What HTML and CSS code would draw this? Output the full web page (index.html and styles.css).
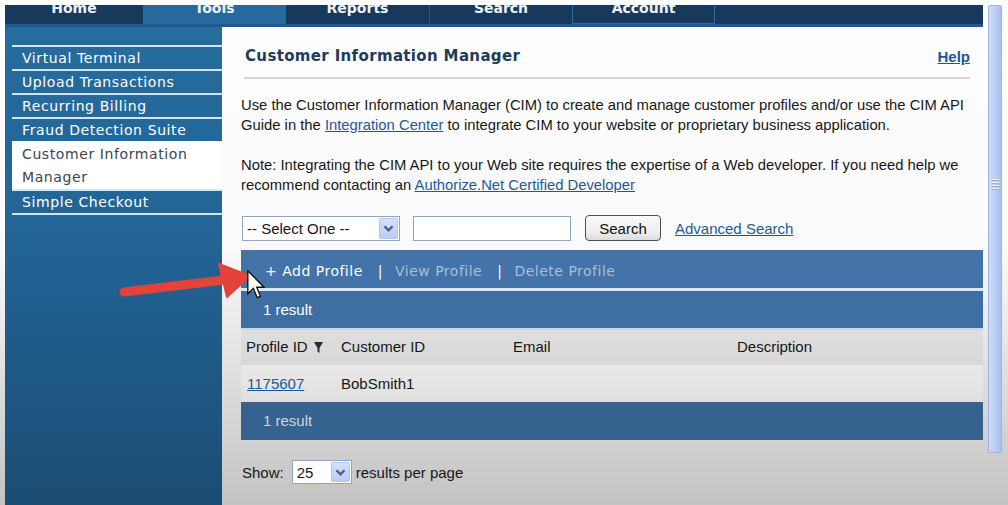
FILE: index.html
```html
<!DOCTYPE html>
<html lang="en">
<head>
<meta charset="utf-8">
<title>Customer Information Manager</title>
<link rel="stylesheet" href="styles.css">
</head>
<body>
<div class="screen">
  <div class="app">
    <nav class="topnav">
      <a class="tab"><span>Home</span></a>
      <a class="tab active"><span>Tools</span></a>
      <a class="tab"><span>Reports</span></a>
      <a class="tab divided"><span>Search</span></a>
      <a class="tab outlined"><span>Account</span></a>
      <span class="tab-rest"></span>
    </nav>
    <div class="main">
      <aside class="sidebar">
        <ul class="menu">
          <li>Virtual Terminal</li>
          <li>Upload Transactions</li>
          <li>Recurring Billing</li>
          <li>Fraud Detection Suite</li>
          <li class="current">Customer Information<br>Manager</li>
          <li>Simple Checkout</li>
        </ul>
      </aside>
      <section class="content">
        <div class="title-row">
          <h1>Customer Information Manager</h1>
          <a class="help">Help</a>
        </div>
        <hr class="rule">
        <p class="intro">Use the Customer Information Manager (CIM) to create and manage customer profiles and/or use the CIM API Guide in the <a class="link">Integration Center</a> to integrate CIM to your website or proprietary business application.</p>
        <p class="note">Note: Integrating the CIM API to your Web site requires the expertise of a Web developer. If you need help we recommend contacting an <a class="link">Authorize.Net Certified Developer</a></p>
        <div class="search-row">
          <div class="select wide">
            <span class="select-text">-- Select One --</span>
            <span class="drop">
              <svg width="19" height="21" viewBox="0 0 19 21"><path d="M5 8 L9.5 12.5 L14 8" fill="none" stroke="#4a5f86" stroke-width="2.6"/></svg>
            </span>
          </div>
          <div class="textbox"></div>
          <button class="btn">Search</button>
          <a class="link adv">Advanced Search</a>
        </div>
        <div class="grid">
          <div class="toolbar">
            <span class="tool on">+ Add Profile</span>
            <span class="bar">|</span>
            <span class="tool off">View Profile</span>
            <span class="bar">|</span>
            <span class="tool off">Delete Profile</span>
          </div>
          <div class="count">1 result</div>
          <table class="results">
            <colgroup><col class="c1"><col class="c2"><col class="c3"><col></colgroup>
            <thead>
              <tr>
                <th>Profile ID <svg class="sort" width="9" height="11" viewBox="0 0 9 11"><path d="M0 0 H9 L5.5 6 V11 L3.5 9.5 V6 Z" fill="#2b2b2b"/></svg></th>
                <th>Customer ID</th>
                <th>Email</th>
                <th>Description</th>
              </tr>
            </thead>
            <tbody>
              <tr>
                <td><a class="link">1175607</a></td>
                <td>BobSmith1</td>
                <td></td>
                <td></td>
              </tr>
            </tbody>
          </table>
          <div class="count foot">1 result</div>
        </div>
        <div class="show-row">
          <span>Show:</span>
          <div class="select small">
            <span class="select-text">25</span>
            <span class="drop">
              <svg width="19" height="20" viewBox="0 0 19 20"><path d="M5 8 L9.5 12.5 L14 8" fill="none" stroke="#4a5f86" stroke-width="2.6"/></svg>
            </span>
          </div>
          <span>results per page</span>
        </div>
      </section>
    </div>
  </div>
  <div class="scrollbar"><div class="grip"><i></i><i></i><i></i><i></i></div></div>
</div>

<svg class="red-arrow" width="150" height="50" viewBox="110 255 150 50">
  <line x1="124" y1="292" x2="224" y2="280" stroke="#e5433a" stroke-width="9" stroke-linecap="round"/>
  <polygon points="219,264 250,276 227,297" fill="#e5433a" stroke="#e5433a" stroke-width="2" stroke-linejoin="round"/>
</svg>
<svg class="cursor" width="18" height="29" viewBox="0 0 12 19.5">
  <path d="M0.5 0.5 L0.5 16 L4.2 12.4 L6.8 18.6 L9 17.7 L6.5 11.6 L11.4 11.6 Z" fill="#fff" stroke="#111" stroke-width="0.9" stroke-linejoin="miter"/>
</svg>
</body>
</html>
```

FILE: styles.css
```css
* { box-sizing: border-box; }

html, body {
  margin: 0;
  padding: 0;
}

body {
  width: 1008px;
  height: 505px;
  overflow: hidden;
  position: relative;
  background: linear-gradient(to bottom, #ffffff 0, #fafafa 250px, #c3c3c3 505px);
  font-family: "Liberation Sans", Arial, sans-serif;
  font-size: 15px;
  color: #171717;
}

.screen {
  display: flex;
  align-items: flex-start;
  height: 505px;
  padding: 5px 0 0 5px;
}

.app {
  width: 978px;
  height: 500px;
  display: flex;
  flex-direction: column;
}

/* ---------- top navigation ---------- */
.topnav {
  display: flex;
  height: 22px;
  background: #17395b;
  border-bottom: 3px solid #22588e;
  overflow: hidden;
}

.tab {
  flex: none;
  width: 143px;
  text-align: center;
  color: #eef3f8;
  font: bold 14px "DejaVu Sans", Verdana, sans-serif;
  line-height: 16px;
  overflow: hidden;
}

.tab:first-child { width: 138px; }

.tab span {
  display: block;
  margin-top: -5px;
}

.tab.active { background: #27689f; }
.tab.divided { border-left: 1px solid #2f5a80; }
.tab.outlined {
  border-left: 1px solid #2d68a8;
  border-right: 1px solid #2d68a8;
  border-bottom: 1px solid #2d68a8;
}

.tab-rest { flex: 1; }

/* ---------- layout ---------- */
.main {
  display: flex;
  flex: 1;
}

.sidebar {
  width: 217px;
  flex: none;
  background: linear-gradient(to bottom, #256c9f 0, #226496 45%, #1b4c73 100%);
  padding: 18px 0 0 7px;
}

.menu {
  list-style: none;
  margin: 0;
  padding: 0;
  border-bottom: 2px solid #d4e4f1;
}

.menu li {
  border-top: 2px solid #d4e4f1;
  padding-left: 10px;
  line-height: 22px;
  color: #ffffff;
  font-family: "DejaVu Sans", Verdana, sans-serif;
  font-size: 14px;
  letter-spacing: 0.6px;
  white-space: nowrap;
}

.menu li.current {
  background: #ffffff;
  border-top-color: #ffffff;
  color: #3a4450;
  line-height: 23px;
}

/* ---------- content ---------- */
.content {
  flex: 1;
  padding: 19px 0 0 19px;
}

.title-row {
  display: flex;
  justify-content: space-between;
  align-items: center;
  height: 20px;
  margin-right: 13px;
  padding-left: 4px;
}

.title-row h1 {
  margin: 0;
  font: bold 15px "DejaVu Sans", Verdana, sans-serif;
  letter-spacing: 0.35px;
  color: #1d3c5b;
}

.help {
  font: bold 15px "Liberation Sans", Arial, sans-serif;
  color: #1a5899;
  text-decoration: underline;
}

.rule {
  margin: 11px 13px 0 3px;
  border: 0;
  border-top: 2px solid #d5d5d5;
  height: 0;
}

.content p {
  margin: 16px 5px 0 0;
  line-height: 20px;
  font-size: 14.8px;
}

.content p.note { margin-top: 20px; }

.link {
  color: #1a5a9c;
  text-decoration: underline;
}

/* ---------- search row ---------- */
.search-row {
  display: flex;
  align-items: center;
  height: 26px;
  margin-top: 20px;
}

.select {
  display: flex;
  align-items: center;
  justify-content: space-between;
  background: #ffffff;
  border: 1px solid #8fa6c0;
  padding: 1px 1px 1px 4px;
}

.select.wide { width: 158px; height: 25px; margin-left: 1px; }
.select.small { width: 60px; height: 24px; margin: 0 4px 0 8px; }

.drop {
  display: flex;
  width: 19px;
  height: 100%;
  background: linear-gradient(to bottom, #d4e1fd, #b9cdf8);
  border: 1px solid #b3c6ee;
  border-radius: 2px;
  align-items: center;
  justify-content: center;
}

.textbox {
  width: 158px;
  height: 25px;
  margin-left: 13px;
  background: #ffffff;
  border: 1px solid #8fa6c0;
}

.btn {
  width: 76px;
  height: 26px;
  margin-left: 14px;
  padding: 0;
  font: 15px "Liberation Sans", Arial, sans-serif;
  color: #111;
  background: linear-gradient(to bottom, #fbfbfb, #ececec 70%, #dcdcdc);
  border: 1px solid #4a4f55;
  border-radius: 4px;
}

.adv { margin-left: 14px; }

/* ---------- results grid ---------- */
.grid {
  margin-top: 9px;
}

.toolbar {
  display: flex;
  align-items: center;
  height: 41px;
  padding: 3px 0 0 24px;
  background: #4373a8;
  border-bottom: 3px solid #dfe7f0;
  font-family: "DejaVu Sans", Verdana, sans-serif;
  font-size: 14px;
  letter-spacing: 0.5px;
}

.tool.on { color: #ffffff; }
.tool.off { color: #a9bfda; }

.bar {
  color: #ffffff;
  margin: 0 12px 0 15px;
}

.count {
  height: 39px;
  line-height: 37px;
  padding-left: 22px;
  background: #3f6ea3;
  border-bottom: 2px solid #c6d6e7;
  color: #ffffff;
}

.count.foot {
  height: 38px;
  line-height: 38px;
  border-bottom: 0;
  background: #36628f;
  color: #ccd6e2;
}

.results {
  width: 100%;
  border-collapse: collapse;
}

.results col.c1 { width: 95px; }
.results col.c2 { width: 172px; }
.results col.c3 { width: 224px; }

.results th {
  height: 35px;
  padding: 0 0 2px 5px;
  text-align: left;
  font-weight: normal;
  background: linear-gradient(to bottom, #dedede, #d8d8d8);
  color: #151515;
}

.results td {
  height: 37px;
  padding: 0 0 0 5px;
  background: linear-gradient(to bottom, #e9e9e9, #e0e0e0);
  color: #151515;
}

.results td:first-child { padding-left: 6px; }

.sort {
  vertical-align: -1px;
  margin-left: 2px;
}

/* ---------- show row ---------- */
.show-row {
  display: flex;
  align-items: center;
  height: 24px;
  margin-top: 20px;
  padding-left: 1px;
}

/* ---------- scrollbar ---------- */
.scrollbar {
  width: 14px;
  height: 448px;
  margin-left: 5px;
  border: 1px solid #9db4dc;
  border-radius: 2px;
  background: linear-gradient(to right, #cddcf7, #bccff3 50%, #aac1eb);
  display: flex;
  justify-content: center;
  padding-top: 173px;
}

.grip {
  display: flex;
  flex-direction: column;
  gap: 1px;
  width: 7px;
}

.grip i {
  display: block;
  background: #eef3fc;
  border-bottom: 1px solid #93acd8;
  height: 2px;
}

/* ---------- overlays ---------- */
.red-arrow {
  position: absolute;
  left: 110px;
  top: 255px;
}

.cursor {
  position: absolute;
  left: 247px;
  top: 270px;
}
```
